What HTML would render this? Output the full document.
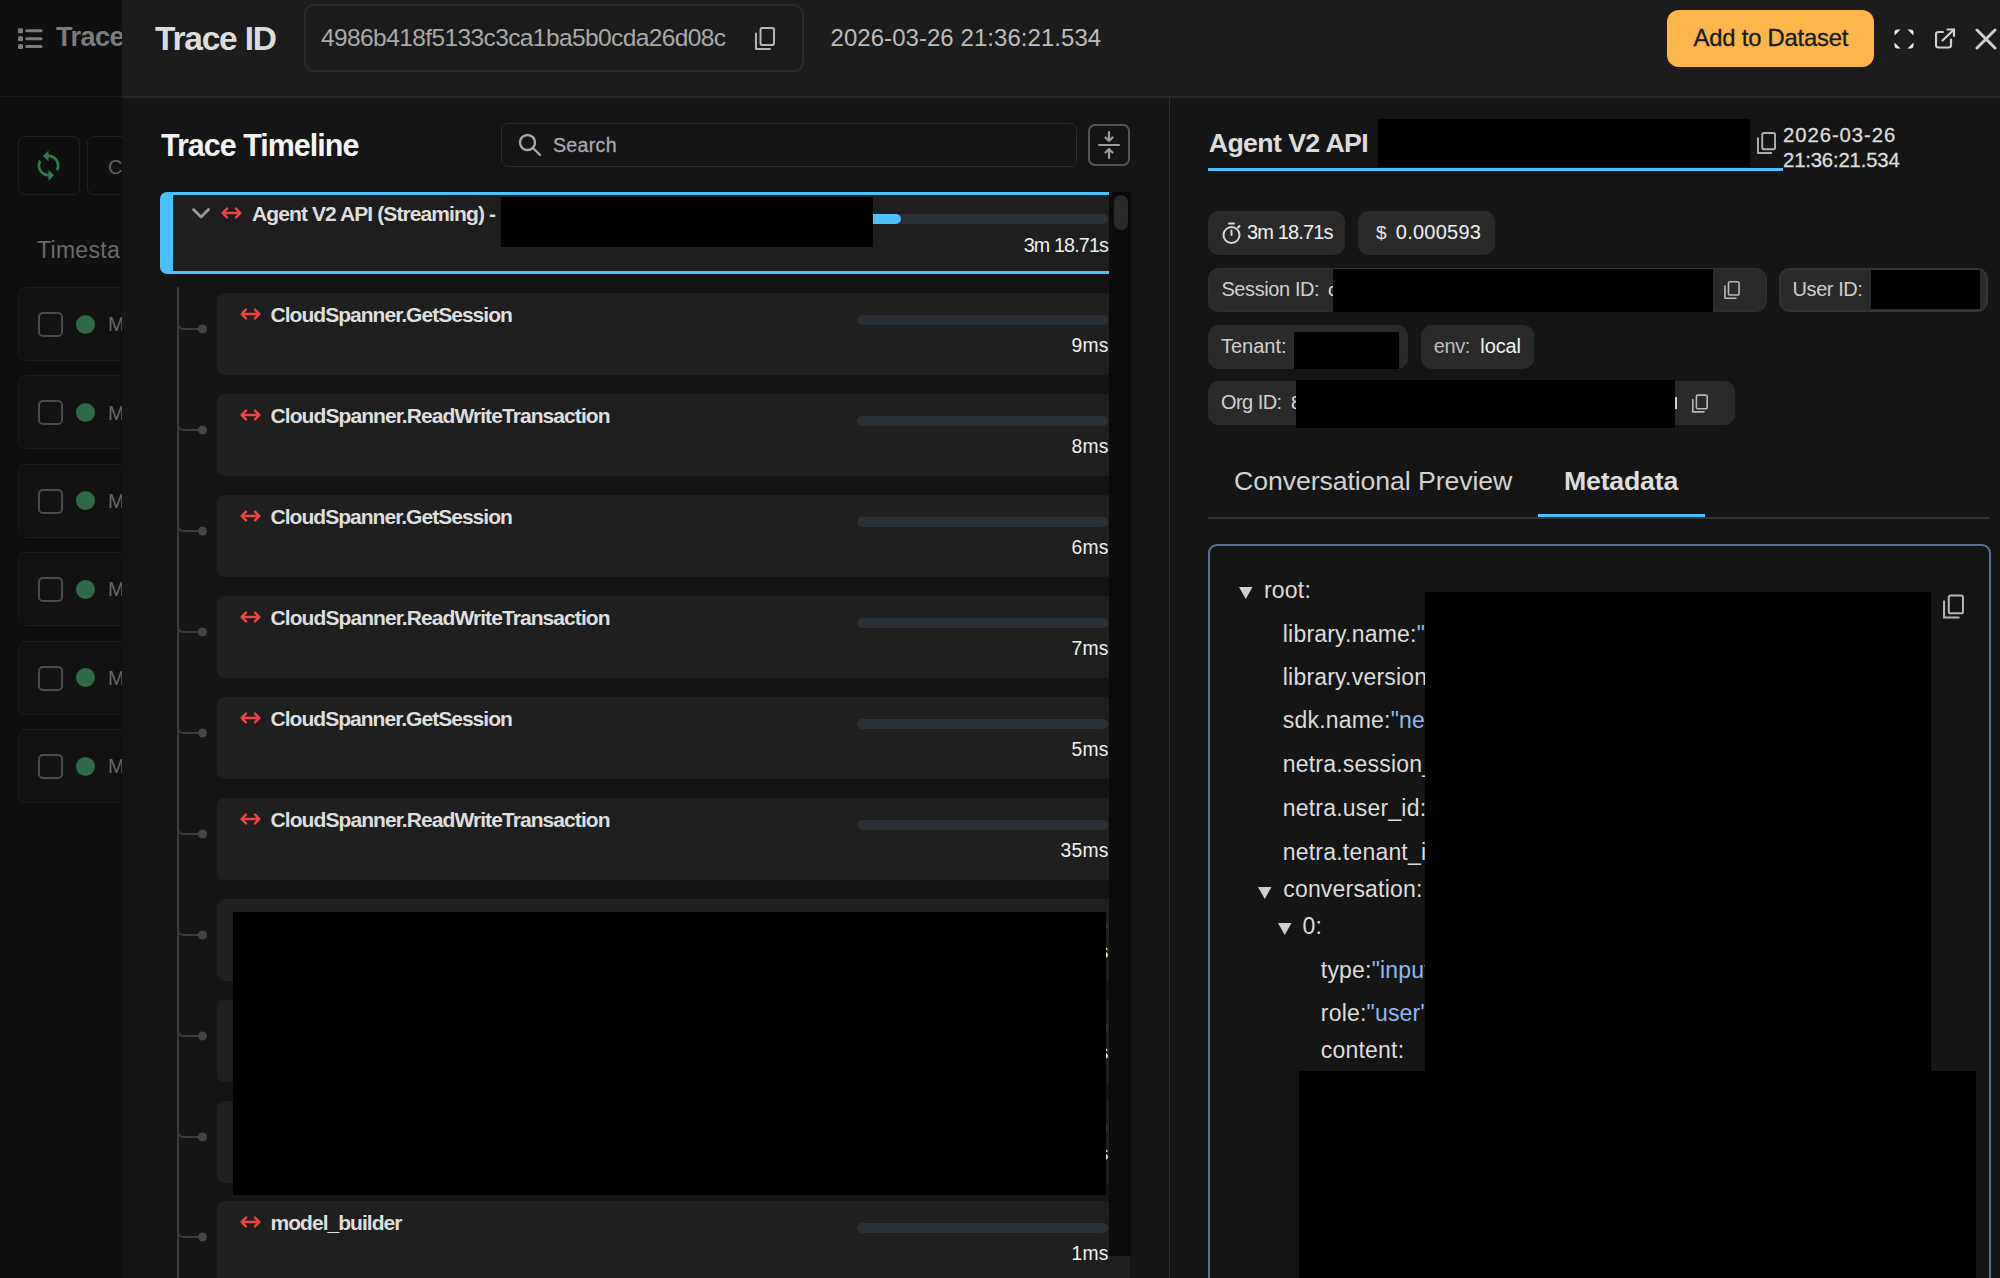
<!DOCTYPE html><html><head><meta charset="utf-8"><style>
html,body{margin:0;padding:0;width:2000px;height:1278px;overflow:hidden;background:#101010;font-family:"Liberation Sans", sans-serif;}
.r{position:absolute;box-sizing:border-box;}
.t{position:absolute;line-height:1;white-space:pre;font-family:"Liberation Sans", sans-serif;}
</style></head><body>
<div class="r" style="left:0px;top:0px;width:122px;height:96px;background:#101010;"></div>
<div class="r" style="left:0px;top:96px;width:122px;height:1px;background:#1b1b1b;"></div>
<svg class="r" style="left:18px;top:28px" width="25" height="22" viewBox="0 0 25 22" fill="#7c7c7c"><rect x="0" y="0.3" width="5" height="5" rx="1.3"/><rect x="0" y="8.2" width="5" height="5" rx="1.3"/><rect x="0" y="16" width="5" height="5" rx="1.3"/><rect x="7.3" y="1.3" width="17.2" height="3" rx="1.5"/><rect x="7.3" y="9.2" width="17.2" height="3" rx="1.5"/><rect x="7.3" y="17" width="17.2" height="3" rx="1.5"/></svg>
<div class="t" style="top:24.19px;font-size:27px;color:#7c7c7c;font-weight:700;letter-spacing:-0.5px;left:56.00px;">Trace</div>
<div class="r" style="left:18px;top:136px;width:62px;height:59px;background:transparent;border:1.5px solid #222;border-radius:7px;"></div>
<svg class="r" style="left:32px;top:149px" width="33" height="33" viewBox="0 0 24 24" fill="#2f7a4a"><path d="M12 4V1L8 5l4 4V6c3.31 0 6 2.69 6 6 0 1.01-.25 1.970-.7 2.8l1.46 1.46C19.54 15.03 20 13.570 20 12c0-4.42-3.58-8-8-8zm0 14c-3.31 0-6-2.69-6-6 0-1.01.25-1.97.7-2.8L5.24 7.74C4.46 8.97 4 10.43 4 12c0 4.42 3.58 8 8 8v3l4-4-4-4v3z"/></svg>
<div class="r" style="left:87px;top:136px;width:53px;height:59px;background:transparent;border:1.5px solid #222;border-radius:7px;"></div>
<div class="t" style="top:157.10px;font-size:20px;color:#5f5f5f;font-weight:400;letter-spacing:0px;left:108.00px;">C</div>
<div class="t" style="top:238.96px;font-size:23px;color:#6a6a6a;font-weight:400;letter-spacing:0.3px;left:37.00px;">Timesta</div>
<div class="r" style="left:18px;top:287.0px;width:122px;height:74.0px;background:#121212;border:1.5px solid #1d1d1d;border-radius:8px;"></div>
<div class="r" style="left:38px;top:312.0px;width:25px;height:25.0px;background:transparent;border:2px solid #4a4a4a;border-radius:5px;"></div>
<div class="r" style="left:75.5px;top:314.5px;width:19px;height:19px;border-radius:50%;background:#2d6a45"></div>
<div class="t" style="top:314.10px;font-size:20px;color:#666;font-weight:400;letter-spacing:0px;left:108.00px;">M</div>
<div class="r" style="left:18px;top:375.4px;width:122px;height:74.0px;background:#121212;border:1.5px solid #1d1d1d;border-radius:8px;"></div>
<div class="r" style="left:38px;top:400.4px;width:25px;height:25.0px;background:transparent;border:2px solid #4a4a4a;border-radius:5px;"></div>
<div class="r" style="left:75.5px;top:402.9px;width:19px;height:19px;border-radius:50%;background:#2d6a45"></div>
<div class="t" style="top:402.50px;font-size:20px;color:#666;font-weight:400;letter-spacing:0px;left:108.00px;">M</div>
<div class="r" style="left:18px;top:463.8px;width:122px;height:73.99999999999994px;background:#121212;border:1.5px solid #1d1d1d;border-radius:8px;"></div>
<div class="r" style="left:38px;top:488.8px;width:25px;height:24.999999999999943px;background:transparent;border:2px solid #4a4a4a;border-radius:5px;"></div>
<div class="r" style="left:75.5px;top:491.3px;width:19px;height:19px;border-radius:50%;background:#2d6a45"></div>
<div class="t" style="top:490.90px;font-size:20px;color:#666;font-weight:400;letter-spacing:0px;left:108.00px;">M</div>
<div class="r" style="left:18px;top:552.2px;width:122px;height:74.0px;background:#121212;border:1.5px solid #1d1d1d;border-radius:8px;"></div>
<div class="r" style="left:38px;top:577.2px;width:25px;height:25.0px;background:transparent;border:2px solid #4a4a4a;border-radius:5px;"></div>
<div class="r" style="left:75.5px;top:579.7px;width:19px;height:19px;border-radius:50%;background:#2d6a45"></div>
<div class="t" style="top:579.30px;font-size:20px;color:#666;font-weight:400;letter-spacing:0px;left:108.00px;">M</div>
<div class="r" style="left:18px;top:640.6px;width:122px;height:74.0px;background:#121212;border:1.5px solid #1d1d1d;border-radius:8px;"></div>
<div class="r" style="left:38px;top:665.6px;width:25px;height:25.0px;background:transparent;border:2px solid #4a4a4a;border-radius:5px;"></div>
<div class="r" style="left:75.5px;top:668.1px;width:19px;height:19px;border-radius:50%;background:#2d6a45"></div>
<div class="t" style="top:667.70px;font-size:20px;color:#666;font-weight:400;letter-spacing:0px;left:108.00px;">M</div>
<div class="r" style="left:18px;top:729.0px;width:122px;height:74.0px;background:#121212;border:1.5px solid #1d1d1d;border-radius:8px;"></div>
<div class="r" style="left:38px;top:754.0px;width:25px;height:25.0px;background:transparent;border:2px solid #4a4a4a;border-radius:5px;"></div>
<div class="r" style="left:75.5px;top:756.5px;width:19px;height:19px;border-radius:50%;background:#2d6a45"></div>
<div class="t" style="top:756.10px;font-size:20px;color:#666;font-weight:400;letter-spacing:0px;left:108.00px;">M</div>
<div class="r" style="left:122px;top:0px;width:1878px;height:96px;background:#1c1c1c;"></div>
<div class="r" style="left:122px;top:96px;width:1878px;height:2px;background:#262626;"></div>
<div class="r" style="left:122px;top:98px;width:1878px;height:1180px;background:#151515;"></div>
<div class="t" style="top:21.69px;font-size:33.5px;color:#dcdcdc;font-weight:700;letter-spacing:-1.2px;left:155.00px;">Trace ID</div>
<div class="r" style="left:304px;top:4px;width:500px;height:68px;background:#1b1b1b;border:2px solid #2a2a2a;border-radius:10px;"></div>
<div class="t" style="top:26.30px;font-size:24.5px;color:#a9a9a9;font-weight:400;letter-spacing:-0.6px;left:321.00px;">4986b418f5133c3ca1ba5b0cda26d08c</div>
<svg class="r" style="left:755px;top:27px" width="20" height="23" viewBox="0 0 20 23" fill="none" stroke="#b5b5b5" stroke-width="2" stroke-linecap="round" stroke-linejoin="round"><rect x="5.5" y="1" width="13.5" height="17" rx="1.8"/><path d="M1 6.5 V22 H15"/></svg>
<div class="t" style="top:26.22px;font-size:24px;color:#bdbdbd;font-weight:400;letter-spacing:0.05px;left:830.50px;">2026-03-26 21:36:21.534</div>
<div class="r" style="left:1667px;top:10px;width:207px;height:57px;background:#fdb64c;border-radius:12px;"></div>
<div class="t" style="top:26.29px;font-size:23.8px;color:#1b1b1b;font-weight:400;letter-spacing:-0.2px;left:1693.60px;-webkit-text-stroke:0.35px #1b1b1b;">Add to Dataset</div>
<svg class="r" style="left:1894px;top:29px" width="20" height="20" viewBox="0 0 20 20" fill="#e8e8e8"><path d="M0.5 6.5 V3.5 Q0.5 0.5 3.5 0.5 H6.5 Z"/><path d="M13.5 0.5 H16.5 Q19.5 0.5 19.5 3.5 V6.5 Z"/><path d="M19.5 13.5 V16.5 Q19.5 19.5 16.5 19.5 H13.5 Z"/><path d="M6.5 19.5 H3.5 Q0.5 19.5 0.5 16.5 V13.5 Z"/></svg>
<svg class="r" style="left:1935px;top:28px" width="21" height="21" viewBox="0 0 21 21" fill="none" stroke="#d0d0d0" stroke-width="2.2" stroke-linecap="round" stroke-linejoin="round"><path d="M8 4 H3.5 Q1 4 1 6.5 V17 Q1 19.5 3.5 19.5 H13.5 Q16 19.5 16 17 V11.5"/><path d="M7.5 12.5 L19 1.5"/><path d="M12.5 1.5 H19 V8"/></svg>
<svg class="r" style="left:1975px;top:28px" width="22" height="22" viewBox="0 0 22 22" fill="none" stroke="#cfcfcf" stroke-width="3" stroke-linecap="round"><path d="M2 2 L20 20 M20 2 L2 20"/></svg>
<div class="r" style="left:1169px;top:98px;width:1px;height:1180px;background:#2a2a2a;"></div>
<div class="t" style="top:129.98px;font-size:30.5px;color:#f2f2f2;font-weight:700;letter-spacing:-1.0px;left:161.00px;">Trace Timeline</div>
<div class="r" style="left:501px;top:123px;width:576px;height:44px;background:#151515;border:1.5px solid #2c2c2c;border-radius:7px;"></div>
<svg class="r" style="left:518px;top:133px" width="24" height="24" viewBox="0 0 24 24" fill="none" stroke="#a6a6b0" stroke-width="2.4" stroke-linecap="round"><circle cx="9.5" cy="9.5" r="7.5"/><path d="M15 15 L22 22"/></svg>
<div class="t" style="top:136.44px;font-size:19.6px;color:#a8a8b0;font-weight:400;letter-spacing:0.3px;left:553.00px;-webkit-text-stroke:0.3px #a8a8b0;">Search</div>
<div class="r" style="left:1088px;top:124px;width:42px;height:42px;background:transparent;border:2px solid #555;border-radius:7px;"></div>
<svg class="r" style="left:1096px;top:130px" width="26" height="30" viewBox="0 0 26 30" fill="none" stroke="#9c9c9c" stroke-width="2.2" stroke-linecap="round" stroke-linejoin="round"><path d="M3 15 H23"/><path d="M13 2 V11 M9.5 7.5 L13 11 L16.5 7.5"/><path d="M13 28 V19 M9.5 22.5 L13 19 L16.5 22.5"/></svg>
<div class="r" style="left:177px;top:287px;width:2px;height:991px;background:#3a3a3a;"></div>
<div class="r" style="left:160px;top:192px;width:970px;height:82px;background:#1e1e1e;border:3px solid #4cc0fd;border-left-width:13px;border-radius:7px;"></div>
<svg class="r" style="left:191px;top:206px" width="20" height="14" viewBox="0 0 20 14" fill="none" stroke="#9a9a9a" stroke-width="2.8" stroke-linecap="round" stroke-linejoin="round"><path d="M2.5 3.5 L10 11 L17.5 3.5"/></svg>
<svg class="r" style="left:221px;top:207px" width="21" height="12" viewBox="0 0 21 12" fill="none" stroke="#ef4444" stroke-width="2.4" stroke-linecap="round" stroke-linejoin="round"><path d="M2 6 H19 M6 1.6 L1.6 6 L6 10.4 M15 1.6 L19.4 6 L15 10.4"/></svg>
<div class="t" style="top:203.25px;font-size:21px;color:#dedede;font-weight:700;letter-spacing:-0.9px;left:252.00px;">Agent V2 API (Streaming) -</div>
<div class="r" style="left:857px;top:214px;width:251px;height:10px;background:#2a3035;border-radius:5px;"></div>
<div class="r" style="left:857px;top:214px;width:44px;height:10px;background:#4cc0fd;border-radius:5px;"></div>
<div class="r" style="left:501px;top:197px;width:372px;height:50px;background:#000;"></div>
<div class="t" style="top:235.55px;font-size:19.7px;color:#f0f0f0;font-weight:400;letter-spacing:-0.85px;right:892.00px;text-align:right;">3m 18.71s</div>
<div class="r" style="left:217px;top:293px;width:913px;height:82px;background:#1f1f1f;border-radius:7px 0 0 7px;"></div>
<svg class="r" style="left:177px;top:308.8px" width="32" height="26" viewBox="0 0 32 26" fill="none"><path d="M1 0 V14 Q1 20 7 20 H24" stroke="#3a3a3a" stroke-width="2"/><circle cx="25.5" cy="20" r="4.5" fill="#454545"/></svg>
<svg class="r" style="left:240px;top:308px" width="21" height="12" viewBox="0 0 21 12" fill="none" stroke="#ef4444" stroke-width="2.4" stroke-linecap="round" stroke-linejoin="round"><path d="M2 6 H19 M6 1.6 L1.6 6 L6 10.4 M15 1.6 L19.4 6 L15 10.4"/></svg>
<div class="t" style="top:304.15px;font-size:21px;color:#dedede;font-weight:700;letter-spacing:-0.97px;left:270.50px;">CloudSpanner.GetSession</div>
<div class="r" style="left:857px;top:314.5px;width:251px;height:10.0px;background:#2a3035;border-radius:5px;"></div>
<div class="t" style="top:336.49px;font-size:19.3px;color:#f0f0f0;font-weight:400;letter-spacing:0.3px;right:891.20px;text-align:right;">9ms</div>
<div class="r" style="left:217px;top:394px;width:913px;height:82px;background:#1f1f1f;border-radius:7px 0 0 7px;"></div>
<svg class="r" style="left:177px;top:409.8px" width="32" height="26" viewBox="0 0 32 26" fill="none"><path d="M1 0 V14 Q1 20 7 20 H24" stroke="#3a3a3a" stroke-width="2"/><circle cx="25.5" cy="20" r="4.5" fill="#454545"/></svg>
<svg class="r" style="left:240px;top:409px" width="21" height="12" viewBox="0 0 21 12" fill="none" stroke="#ef4444" stroke-width="2.4" stroke-linecap="round" stroke-linejoin="round"><path d="M2 6 H19 M6 1.6 L1.6 6 L6 10.4 M15 1.6 L19.4 6 L15 10.4"/></svg>
<div class="t" style="top:405.15px;font-size:21px;color:#dedede;font-weight:700;letter-spacing:-0.92px;left:270.50px;">CloudSpanner.ReadWriteTransaction</div>
<div class="r" style="left:857px;top:415.5px;width:251px;height:10.0px;background:#2a3035;border-radius:5px;"></div>
<div class="t" style="top:437.49px;font-size:19.3px;color:#f0f0f0;font-weight:400;letter-spacing:0.3px;right:891.20px;text-align:right;">8ms</div>
<div class="r" style="left:217px;top:495px;width:913px;height:82px;background:#1f1f1f;border-radius:7px 0 0 7px;"></div>
<svg class="r" style="left:177px;top:510.79999999999995px" width="32" height="26" viewBox="0 0 32 26" fill="none"><path d="M1 0 V14 Q1 20 7 20 H24" stroke="#3a3a3a" stroke-width="2"/><circle cx="25.5" cy="20" r="4.5" fill="#454545"/></svg>
<svg class="r" style="left:240px;top:510px" width="21" height="12" viewBox="0 0 21 12" fill="none" stroke="#ef4444" stroke-width="2.4" stroke-linecap="round" stroke-linejoin="round"><path d="M2 6 H19 M6 1.6 L1.6 6 L6 10.4 M15 1.6 L19.4 6 L15 10.4"/></svg>
<div class="t" style="top:506.15px;font-size:21px;color:#dedede;font-weight:700;letter-spacing:-0.97px;left:270.50px;">CloudSpanner.GetSession</div>
<div class="r" style="left:857px;top:516.5px;width:251px;height:10.0px;background:#2a3035;border-radius:5px;"></div>
<div class="t" style="top:538.49px;font-size:19.3px;color:#f0f0f0;font-weight:400;letter-spacing:0.3px;right:891.20px;text-align:right;">6ms</div>
<div class="r" style="left:217px;top:596px;width:913px;height:82px;background:#1f1f1f;border-radius:7px 0 0 7px;"></div>
<svg class="r" style="left:177px;top:611.8px" width="32" height="26" viewBox="0 0 32 26" fill="none"><path d="M1 0 V14 Q1 20 7 20 H24" stroke="#3a3a3a" stroke-width="2"/><circle cx="25.5" cy="20" r="4.5" fill="#454545"/></svg>
<svg class="r" style="left:240px;top:611px" width="21" height="12" viewBox="0 0 21 12" fill="none" stroke="#ef4444" stroke-width="2.4" stroke-linecap="round" stroke-linejoin="round"><path d="M2 6 H19 M6 1.6 L1.6 6 L6 10.4 M15 1.6 L19.4 6 L15 10.4"/></svg>
<div class="t" style="top:607.15px;font-size:21px;color:#dedede;font-weight:700;letter-spacing:-0.92px;left:270.50px;">CloudSpanner.ReadWriteTransaction</div>
<div class="r" style="left:857px;top:617.5px;width:251px;height:10.0px;background:#2a3035;border-radius:5px;"></div>
<div class="t" style="top:639.49px;font-size:19.3px;color:#f0f0f0;font-weight:400;letter-spacing:0.3px;right:891.20px;text-align:right;">7ms</div>
<div class="r" style="left:217px;top:697px;width:913px;height:82px;background:#1f1f1f;border-radius:7px 0 0 7px;"></div>
<svg class="r" style="left:177px;top:712.8px" width="32" height="26" viewBox="0 0 32 26" fill="none"><path d="M1 0 V14 Q1 20 7 20 H24" stroke="#3a3a3a" stroke-width="2"/><circle cx="25.5" cy="20" r="4.5" fill="#454545"/></svg>
<svg class="r" style="left:240px;top:712px" width="21" height="12" viewBox="0 0 21 12" fill="none" stroke="#ef4444" stroke-width="2.4" stroke-linecap="round" stroke-linejoin="round"><path d="M2 6 H19 M6 1.6 L1.6 6 L6 10.4 M15 1.6 L19.4 6 L15 10.4"/></svg>
<div class="t" style="top:708.15px;font-size:21px;color:#dedede;font-weight:700;letter-spacing:-0.97px;left:270.50px;">CloudSpanner.GetSession</div>
<div class="r" style="left:857px;top:718.5px;width:251px;height:10.0px;background:#2a3035;border-radius:5px;"></div>
<div class="t" style="top:740.49px;font-size:19.3px;color:#f0f0f0;font-weight:400;letter-spacing:0.3px;right:891.20px;text-align:right;">5ms</div>
<div class="r" style="left:217px;top:798px;width:913px;height:82px;background:#1f1f1f;border-radius:7px 0 0 7px;"></div>
<svg class="r" style="left:177px;top:813.8px" width="32" height="26" viewBox="0 0 32 26" fill="none"><path d="M1 0 V14 Q1 20 7 20 H24" stroke="#3a3a3a" stroke-width="2"/><circle cx="25.5" cy="20" r="4.5" fill="#454545"/></svg>
<svg class="r" style="left:240px;top:813px" width="21" height="12" viewBox="0 0 21 12" fill="none" stroke="#ef4444" stroke-width="2.4" stroke-linecap="round" stroke-linejoin="round"><path d="M2 6 H19 M6 1.6 L1.6 6 L6 10.4 M15 1.6 L19.4 6 L15 10.4"/></svg>
<div class="t" style="top:809.15px;font-size:21px;color:#dedede;font-weight:700;letter-spacing:-0.92px;left:270.50px;">CloudSpanner.ReadWriteTransaction</div>
<div class="r" style="left:857px;top:819.5px;width:251px;height:10.0px;background:#2a3035;border-radius:5px;"></div>
<div class="t" style="top:841.49px;font-size:19.3px;color:#f0f0f0;font-weight:400;letter-spacing:0.3px;right:891.20px;text-align:right;">35ms</div>
<div class="r" style="left:217px;top:899px;width:913px;height:82px;background:#1f1f1f;border-radius:7px 0 0 7px;"></div>
<svg class="r" style="left:177px;top:914.8px" width="32" height="26" viewBox="0 0 32 26" fill="none"><path d="M1 0 V14 Q1 20 7 20 H24" stroke="#3a3a3a" stroke-width="2"/><circle cx="25.5" cy="20" r="4.5" fill="#454545"/></svg>
<div class="r" style="left:857px;top:920.5px;width:251px;height:10.0px;background:#2a3035;border-radius:5px;"></div>
<div class="t" style="top:942.49px;font-size:19.3px;color:#f0f0f0;font-weight:400;letter-spacing:0.3px;right:891.20px;text-align:right;">ms</div>
<div class="r" style="left:217px;top:1000px;width:913px;height:82px;background:#1f1f1f;border-radius:7px 0 0 7px;"></div>
<svg class="r" style="left:177px;top:1015.8px" width="32" height="26" viewBox="0 0 32 26" fill="none"><path d="M1 0 V14 Q1 20 7 20 H24" stroke="#3a3a3a" stroke-width="2"/><circle cx="25.5" cy="20" r="4.5" fill="#454545"/></svg>
<div class="r" style="left:857px;top:1021.5px;width:251px;height:10.0px;background:#2a3035;border-radius:5px;"></div>
<div class="t" style="top:1043.49px;font-size:19.3px;color:#f0f0f0;font-weight:400;letter-spacing:0.3px;right:891.20px;text-align:right;">ms</div>
<div class="r" style="left:217px;top:1101px;width:913px;height:82px;background:#1f1f1f;border-radius:7px 0 0 7px;"></div>
<svg class="r" style="left:177px;top:1116.8px" width="32" height="26" viewBox="0 0 32 26" fill="none"><path d="M1 0 V14 Q1 20 7 20 H24" stroke="#3a3a3a" stroke-width="2"/><circle cx="25.5" cy="20" r="4.5" fill="#454545"/></svg>
<div class="r" style="left:857px;top:1122.5px;width:251px;height:10.0px;background:#2a3035;border-radius:5px;"></div>
<div class="t" style="top:1144.49px;font-size:19.3px;color:#f0f0f0;font-weight:400;letter-spacing:0.3px;right:891.20px;text-align:right;">ms</div>
<div class="r" style="left:217px;top:1201px;width:913px;height:82px;background:#1f1f1f;border-radius:7px 0 0 7px;"></div>
<svg class="r" style="left:177px;top:1216.8px" width="32" height="26" viewBox="0 0 32 26" fill="none"><path d="M1 0 V14 Q1 20 7 20 H24" stroke="#3a3a3a" stroke-width="2"/><circle cx="25.5" cy="20" r="4.5" fill="#454545"/></svg>
<svg class="r" style="left:240px;top:1216px" width="21" height="12" viewBox="0 0 21 12" fill="none" stroke="#ef4444" stroke-width="2.4" stroke-linecap="round" stroke-linejoin="round"><path d="M2 6 H19 M6 1.6 L1.6 6 L6 10.4 M15 1.6 L19.4 6 L15 10.4"/></svg>
<div class="t" style="top:1212.16px;font-size:21px;color:#dedede;font-weight:700;letter-spacing:-0.97px;left:270.50px;">model_builder</div>
<div class="r" style="left:857px;top:1222.5px;width:251px;height:10.0px;background:#2a3035;border-radius:5px;"></div>
<div class="t" style="top:1244.49px;font-size:19.3px;color:#f0f0f0;font-weight:400;letter-spacing:0.3px;right:891.20px;text-align:right;">1ms</div>
<div class="r" style="left:233px;top:912px;width:873px;height:283px;background:#000;"></div>
<div class="r" style="left:1109px;top:192px;width:22px;height:1064px;background:#0b0b0b;"></div>
<div class="r" style="left:1114px;top:195px;width:14px;height:35px;background:#2a2a2a;border-radius:7px;"></div>
<div class="t" style="top:129.84px;font-size:26.7px;color:#dcdcdc;font-weight:700;letter-spacing:-0.6px;left:1208.75px;">Agent V2 API</div>
<div class="r" style="left:1378px;top:119px;width:372px;height:48px;background:#000;"></div>
<svg class="r" style="left:1757px;top:132px" width="19" height="22" viewBox="0 0 20 23" fill="none" stroke="#b0b0b0" stroke-width="2" stroke-linecap="round" stroke-linejoin="round"><rect x="5.5" y="1" width="13.5" height="17" rx="1.8"/><path d="M1 6.5 V22 H15"/></svg>
<div class="r" style="left:1208px;top:168px;width:575px;height:3px;background:#4cc0fd;"></div>
<div class="t" style="top:124.65px;font-size:20.3px;color:#dcdcdc;font-weight:400;letter-spacing:0.95px;left:1783.00px;-webkit-text-stroke:0.3px #dcdcdc;">2026-03-26</div>
<div class="t" style="top:149.85px;font-size:20.3px;color:#dcdcdc;font-weight:400;letter-spacing:-0.15px;left:1783.00px;-webkit-text-stroke:0.3px #dcdcdc;">21:36:21.534</div>
<div class="r" style="left:1208px;top:211px;width:137px;height:44px;background:#2a2a2a;border-radius:11px;"></div>
<svg class="r" style="left:1222px;top:222px" width="20" height="23" viewBox="0 0 20 23" fill="none" stroke="#d8d8d8" stroke-width="2" stroke-linecap="round"><circle cx="9.5" cy="13" r="8"/><path d="M9.5 13 V8.5"/><path d="M7 1.5 H12"/><path d="M16 5.5 L17.5 4"/></svg>
<div class="t" style="top:222.40px;font-size:20px;color:#f0f0f0;font-weight:400;letter-spacing:-0.85px;left:1247.00px;">3m 18.71s</div>
<div class="r" style="left:1358px;top:211px;width:137px;height:44px;background:#2a2a2a;border-radius:11px;"></div>
<div class="t" style="top:223.25px;font-size:19px;color:#e6e6e6;font-weight:400;letter-spacing:0px;left:1376.00px;">$</div>
<div class="t" style="top:222.40px;font-size:20px;color:#f0f0f0;font-weight:400;letter-spacing:0.25px;left:1395.80px;">0.000593</div>
<div class="r" style="left:1208px;top:268px;width:559px;height:44px;background:#2a2a2a;border-radius:11px;border:1px solid #303030;"></div>
<div class="t" style="top:279.40px;font-size:20px;color:#cfcfcf;font-weight:400;letter-spacing:-0.4px;left:1221.40px;">Session ID:</div>
<div class="t" style="top:280.25px;font-size:19px;color:#dedede;font-weight:400;letter-spacing:0px;left:1328.00px;">c</div>
<div class="r" style="left:1333px;top:269px;width:380px;height:43px;background:#000;"></div>
<svg class="r" style="left:1724px;top:281px" width="16" height="18" viewBox="0 0 20 23" fill="none" stroke="#b8b8b8" stroke-width="2" stroke-linecap="round" stroke-linejoin="round"><rect x="5.5" y="1" width="13.5" height="17" rx="1.8"/><path d="M1 6.5 V22 H15"/></svg>
<div class="r" style="left:1779px;top:268px;width:209px;height:44px;background:#2a2a2a;border-radius:11px;border:2px solid #333;"></div>
<div class="t" style="top:279.40px;font-size:20px;color:#cfcfcf;font-weight:400;letter-spacing:-0.45px;left:1792.60px;">User ID:</div>
<div class="r" style="left:1871px;top:270px;width:109px;height:39px;background:#000;"></div>
<div class="r" style="left:1208px;top:325px;width:200px;height:44px;background:#2a2a2a;border-radius:11px;"></div>
<div class="t" style="top:336.40px;font-size:20px;color:#cfcfcf;font-weight:400;letter-spacing:0px;left:1221.00px;">Tenant:</div>
<div class="r" style="left:1294px;top:332px;width:105px;height:37px;background:#000;"></div>
<div class="r" style="left:1421px;top:325px;width:113px;height:44px;background:#2a2a2a;border-radius:11px;"></div>
<div class="t" style="top:336.40px;font-size:20px;color:#bdbdbd;font-weight:400;letter-spacing:-0.4px;left:1433.80px;">env:</div>
<div class="t" style="top:336.40px;font-size:20px;color:#f0f0f0;font-weight:400;letter-spacing:-0.1px;left:1480.30px;">local</div>
<div class="r" style="left:1208px;top:381px;width:527px;height:44px;background:#2a2a2a;border-radius:11px;"></div>
<div class="t" style="top:392.40px;font-size:20px;color:#cfcfcf;font-weight:400;letter-spacing:-0.55px;left:1221.00px;">Org ID:</div>
<div class="t" style="top:393.25px;font-size:19px;color:#dedede;font-weight:400;letter-spacing:0px;left:1291.00px;">8</div>
<div class="r" style="left:1296px;top:380px;width:379px;height:48px;background:#000;"></div>
<div class="r" style="left:1675px;top:397px;width:2px;height:12px;background:#cfcfcf;"></div>
<svg class="r" style="left:1692px;top:394px" width="16" height="19" viewBox="0 0 20 23" fill="none" stroke="#b8b8b8" stroke-width="2" stroke-linecap="round" stroke-linejoin="round"><rect x="5.5" y="1" width="13.5" height="17" rx="1.8"/><path d="M1 6.5 V22 H15"/></svg>
<div class="t" style="top:468.34px;font-size:26.7px;color:#d2d2d2;font-weight:400;letter-spacing:-0.1px;left:1234.00px;">Conversational Preview</div>
<div class="t" style="top:468.34px;font-size:26.7px;color:#dedede;font-weight:700;letter-spacing:-0.2px;left:1564.00px;">Metadata</div>
<div class="r" style="left:1208px;top:517px;width:782px;height:2px;background:#333;"></div>
<div class="r" style="left:1538px;top:514px;width:167px;height:3px;background:#4cc0fd;"></div>
<div class="r" style="left:1208px;top:544px;width:783px;height:756px;background:#151515;border:2px solid #587394;border-radius:9px;"></div>
<svg class="r" style="left:1943px;top:594px" width="21" height="25" viewBox="0 0 20 23" fill="none" stroke="#b8b8b8" stroke-width="1.9" stroke-linecap="round"><rect x="5.5" y="1" width="13.5" height="17" rx="1.8"/><path d="M1 6.5 V22 H15"/></svg>
<svg class="r" style="left:1239px;top:587px" width="13.5" height="12" viewBox="0 0 13.5 12"><path d="M0 0 H13.5 L6.75 12 Z" fill="#cfcfcf"/></svg>
<div class="t" style="top:578.57px;font-size:23px;color:#dcdcdc;font-weight:400;letter-spacing:0.2px;left:1264.00px;">root:</div>
<div class="t" style="top:622.57px;font-size:23px;color:#dcdcdc;font-weight:400;letter-spacing:0.2px;left:1282.80px;">library.name:<span style="color:#8fb8f6">"</span></div>
<div class="t" style="top:665.57px;font-size:23px;color:#dcdcdc;font-weight:400;letter-spacing:0.2px;left:1282.80px;">library.version</div>
<div class="t" style="top:709.17px;font-size:23px;color:#dcdcdc;font-weight:400;letter-spacing:0.2px;left:1282.80px;">sdk.name:<span style="color:#8fb8f6">"ne</span></div>
<div class="t" style="top:752.97px;font-size:23px;color:#dcdcdc;font-weight:400;letter-spacing:0.2px;left:1282.80px;">netra.session_</div>
<div class="t" style="top:796.57px;font-size:23px;color:#dcdcdc;font-weight:400;letter-spacing:0.2px;left:1282.80px;">netra.user_id:</div>
<div class="t" style="top:841.07px;font-size:23px;color:#dcdcdc;font-weight:400;letter-spacing:0.2px;left:1282.80px;">netra.tenant_id</div>
<svg class="r" style="left:1258px;top:886.5px" width="13.5" height="12" viewBox="0 0 13.5 12"><path d="M0 0 H13.5 L6.75 12 Z" fill="#cfcfcf"/></svg>
<div class="t" style="top:877.67px;font-size:23px;color:#dcdcdc;font-weight:400;letter-spacing:0.2px;left:1283.20px;">conversation:</div>
<svg class="r" style="left:1278px;top:923px" width="13.5" height="12" viewBox="0 0 13.5 12"><path d="M0 0 H13.5 L6.75 12 Z" fill="#cfcfcf"/></svg>
<div class="t" style="top:914.67px;font-size:23px;color:#dcdcdc;font-weight:400;letter-spacing:0.2px;left:1302.50px;">0:</div>
<div class="t" style="top:958.57px;font-size:23px;color:#dcdcdc;font-weight:400;letter-spacing:0.2px;left:1320.80px;">type:<span style="color:#8fb8f6">"input</span></div>
<div class="t" style="top:1001.77px;font-size:23px;color:#dcdcdc;font-weight:400;letter-spacing:0.2px;left:1320.80px;">role:<span style="color:#8fb8f6">"user"</span></div>
<div class="t" style="top:1038.77px;font-size:23px;color:#dcdcdc;font-weight:400;letter-spacing:0.2px;left:1320.80px;">content:</div>
<div class="r" style="left:1425px;top:592px;width:506px;height:686px;background:#000;"></div>
<div class="r" style="left:1299px;top:1071px;width:677px;height:207px;background:#000;"></div>
</body></html>
